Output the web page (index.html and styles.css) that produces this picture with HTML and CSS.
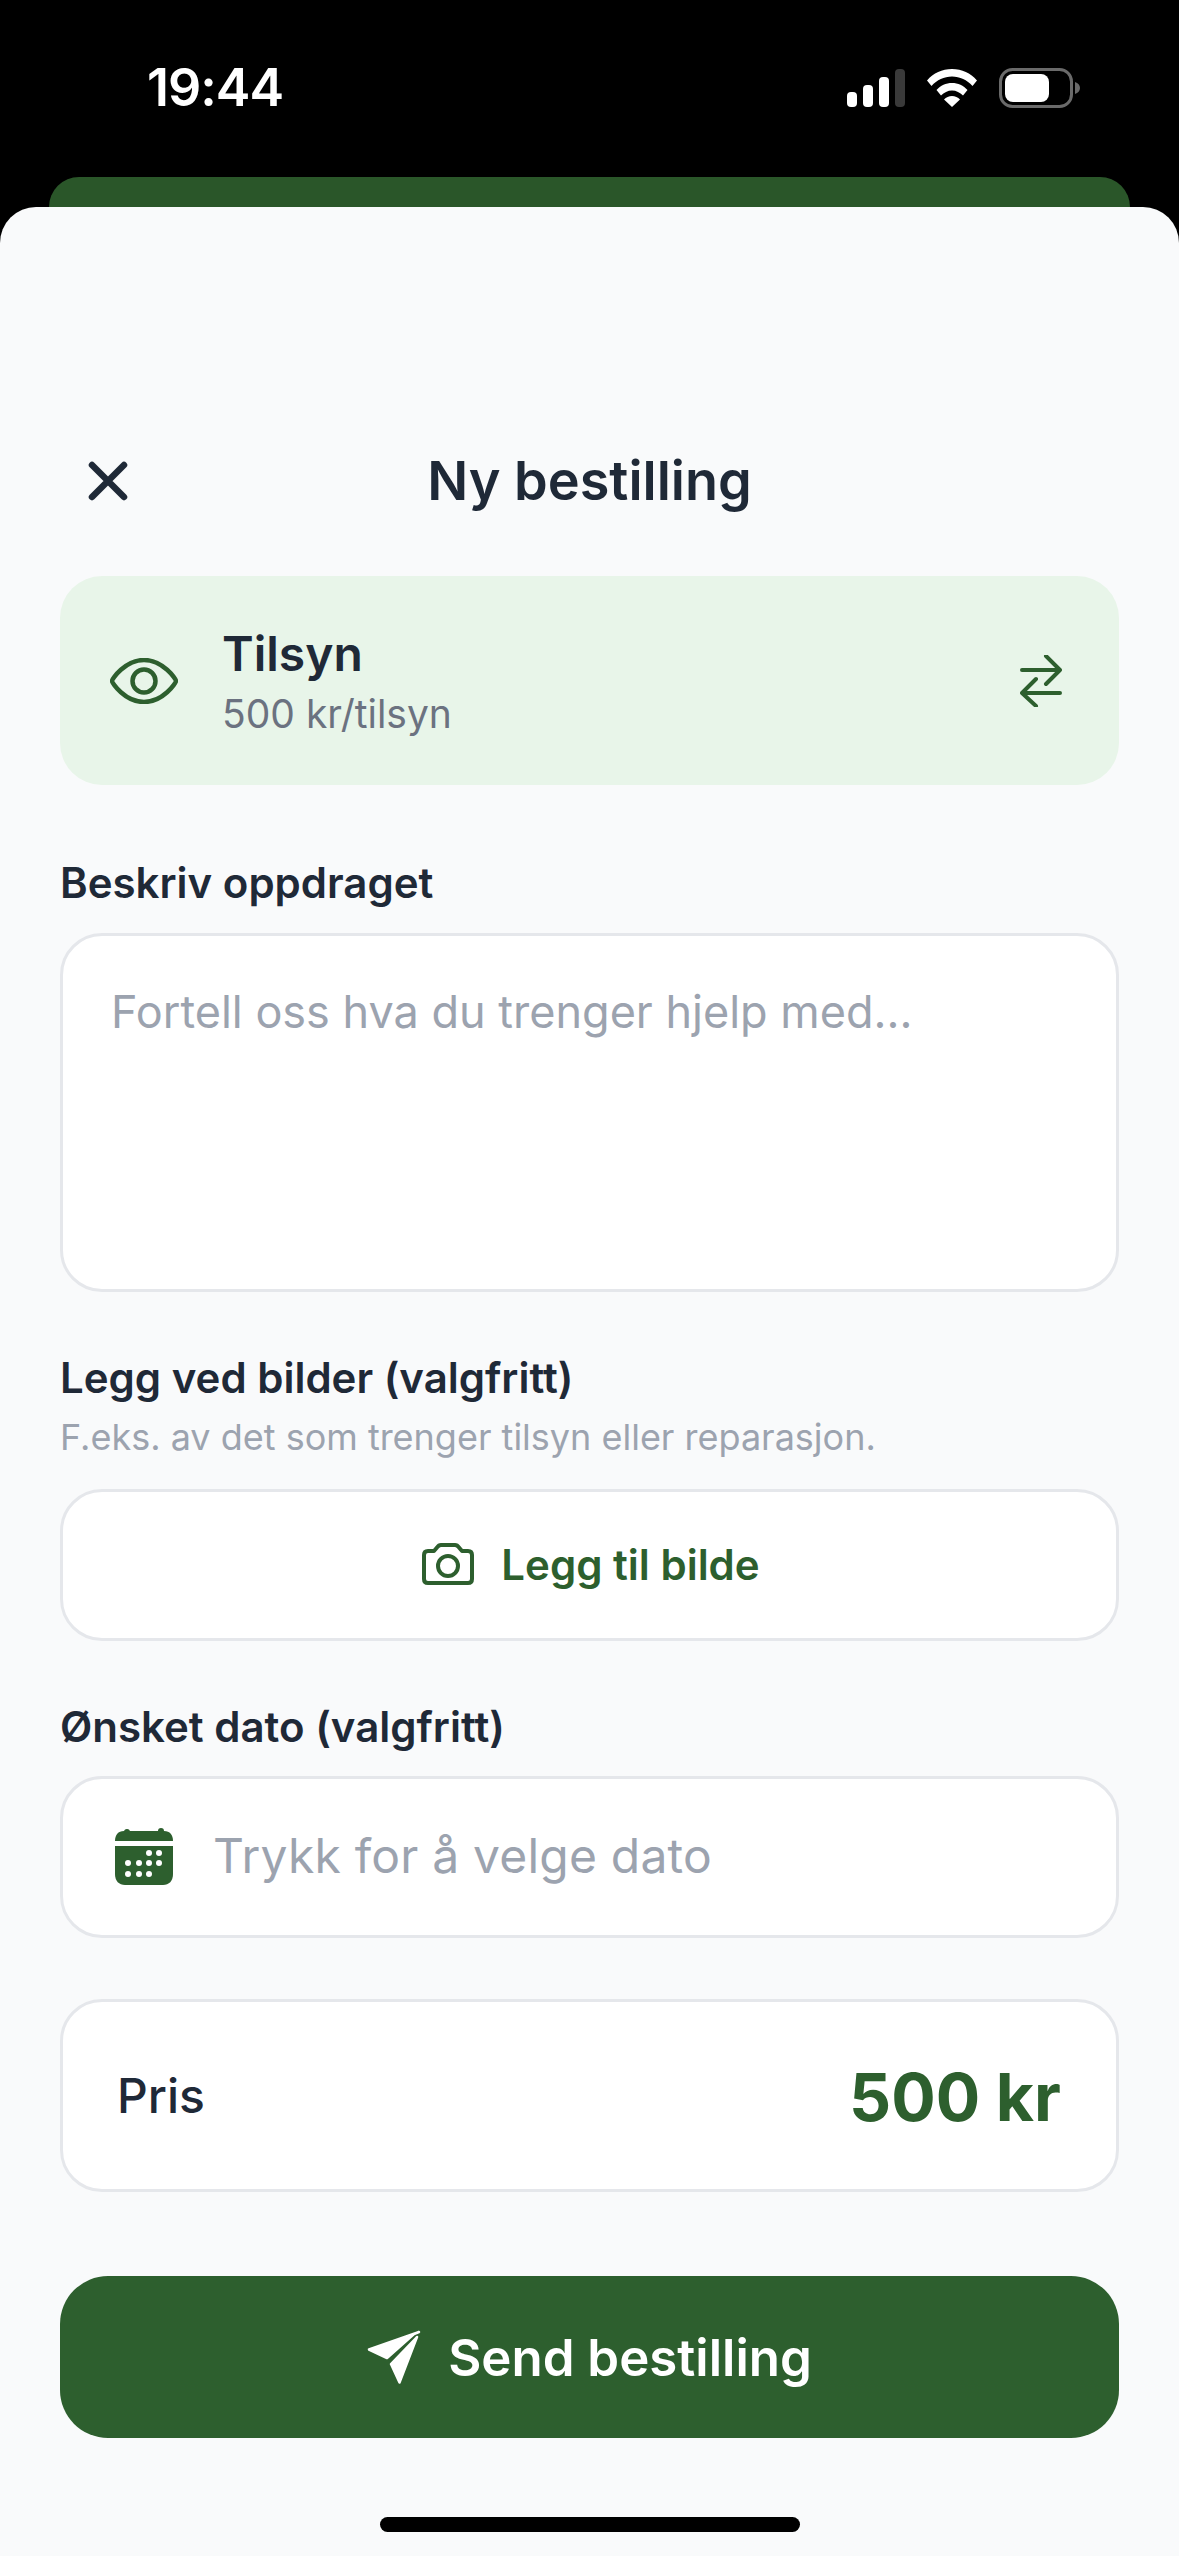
FILE: index.html
```html
<!DOCTYPE html>
<html lang="no">
<head>
  <meta charset="UTF-8" />
  <meta name="viewport" content="width=device-width, initial-scale=1" />
  <title>Ny bestilling</title>
  <link rel="stylesheet" href="styles.css">
</head>
<body>

  <div class="status-bar">
    <span class="time">19:44</span>
    <div class="status-icons">
      <svg class="signal" width="58" height="38" viewBox="0 0 58 38">
        <rect x="0" y="23" width="10" height="15" rx="4" fill="#fff"/>
        <rect x="16" y="16" width="10" height="22" rx="4" fill="#fff"/>
        <rect x="32" y="8" width="10" height="30" rx="4" fill="#fff"/>
        <rect x="48" y="0" width="10" height="38" rx="4" fill="#3a3a3a"/>
      </svg>
      <svg class="wifi" width="50" height="38" viewBox="0 0 50 38">
        <path d="M0 11.500C6.500 4 15 0 25 0s18.500 4 25 11.500l-4.500 5.500C40 11 33 7.500 25 7.500S10 11 4.500 17z" fill="#fff"/>
        <path d="M9.500 21C13.500 16.500 19 14 25 14s11.500 2.500 15.500 7L36 26.500C33 23.500 29.200 21.500 25 21.500s-8 2-11 5z" fill="#fff"/>
        <path d="M17 30.500c2-2.200 5-3.500 8-3.500s6 1.300 8 3.500L25 38z" fill="#fff"/>
      </svg>
      <svg class="battery" width="82" height="40" viewBox="0 0 82 40">
        <rect x="1.500" y="1.500" width="71" height="37" rx="12" fill="none" stroke="#6a6a6a" stroke-width="3"/>
        <rect x="6" y="6" width="44" height="28" rx="8" fill="#fff"/>
        <path d="M76 14c3 1 5 3 5 6s-2 5-5 6z" fill="#6a6a6a"/>
      </svg>
    </div>
  </div>
  <div class="peek"></div>

  <div class="sheet">
    <div class="header">
      <svg class="close-icon" width="40" height="40" viewBox="0 0 40 40" fill="none" stroke="#1f2937" stroke-width="6.500" stroke-linecap="round">
        <path d="M4 4l32 32M36 4L4 36"/>
      </svg>
      <h1 class="title">Ny bestilling</h1>
    </div>

    <div class="service-card">
      <svg class="eye-icon" width="68" height="46" viewBox="0 0 68 46" fill="none" stroke="#2d5f2e" stroke-width="4.500">
        <path d="M2 23C2 21 15 2 34 2s32 19 32 21-13 21-32 21S2 25 2 23z"/>
        <circle cx="34" cy="23" r="11.500"/>
      </svg>
      <div class="service-text">
        <div class="service-name">Tilsyn</div>
        <div class="service-price">500 kr/tilsyn</div>
      </div>
      <svg class="swap-icon" width="42" height="52" viewBox="0 0 42 52" fill="none" stroke="#2d5f2e" stroke-width="4" stroke-linecap="round" stroke-linejoin="round">
        <path d="M2 15h38M26 1l14 14-14 14M40 38H2M16 24L2 38l14 13"/>
      </svg>
    </div>

    <div class="label label-first">Beskriv oppdraget</div>
    <div class="field field-text">Fortell oss hva du trenger hjelp med...</div>

    <div class="label label-photos">Legg ved bilder (valgfritt)</div>
    <div class="hint">F.eks. av det som trenger tilsyn eller reparasjon.</div>
    <button class="add-photo">
      <svg width="52" height="42" viewBox="0 0 52 42" fill="none" stroke="#2d5f2e" stroke-width="4" stroke-linejoin="round">
        <path d="M6 8h6l3-3.500C16 3 17.500 2 19 2h14c1.500 0 3 1 4 2.500L40 8h6c2.500 0 4 1.500 4 4v24c0 2.500-1.500 4-4 4H6c-2.500 0-4-1.500-4-4V12c0-2.500 1.500-4 4-4z"/>
        <circle cx="26" cy="23" r="10"/>
      </svg>
      <span>Legg til bilde</span>
    </button>

    <div class="label label-date">Ønsket dato (valgfritt)</div>
    <div class="field date-field">
      <svg width="58" height="58" viewBox="0 0 58 58">
        <path d="M9 4h0a3 3 0 0 1 3-2 3 3 0 0 1 3 2h28a3 3 0 0 1 3-3 3 3 0 0 1 3 3c6 0 9 4 9 10H0C0 8 3 4 9 4z" fill="#2d5f2e"/>
        <path d="M0 19h58v28c0 7-4 11-10 11H10C4 58 0 54 0 47z" fill="#2d5f2e"/>
        <g fill="#fff">
          <circle cx="34" cy="26" r="3"/><circle cx="44" cy="26" r="3"/>
          <circle cx="13" cy="36" r="3"/><circle cx="24" cy="36" r="3"/><circle cx="34" cy="36" r="3"/><circle cx="44" cy="36" r="3"/>
          <circle cx="13" cy="47" r="3"/><circle cx="24" cy="47" r="3"/><circle cx="34" cy="47" r="3"/>
        </g>
      </svg>
      <span>Trykk for å velge dato</span>
    </div>

    <div class="price-box">
      <span class="price-label">Pris</span>
      <span class="price-value">500 kr</span>
    </div>

    <button class="send">
      <svg width="54" height="54" viewBox="0 0 54 54" fill="#fff" stroke="#fff" stroke-width="2.500" stroke-linejoin="round">
        <path d="M52 2L2 19.500 20 28 47 4z"/>
        <path d="M50 7L24 34l8.500 18.500z"/>
      </svg>
      <span>Send bestilling</span>
    </button>

    <div class="home-indicator"></div>
  </div>

</body>
</html>
```

FILE: styles.css
```css
* {
  box-sizing: border-box;
}
body {
  margin: 0;
  background-color: #000;
  font-family: Inter, "Noto Sans", sans-serif;
  color: #1f2937;
}
.status-bar {
  height: 177px;
  padding: 68px 98px 0 147px;
  display: flex;
  justify-content: space-between;
  align-items: flex-start;
  color: #fff;
}
.time {
  font-size: 52px;
  font-weight: 600;
  line-height: 40px;
  letter-spacing: -1px;
}
.status-icons {
  display: flex;
  align-items: center;
  gap: 22px;
}
.peek {
  height: 30px;
  margin: 0 49px;
  background-color: #2a5629;
  border-radius: 30px 30px 0 0;
}
.sheet {
  height: 2349px;
  padding: 229px 60px 0;
  background-color: #f9fafb;
  border-radius: 36px 36px 0 0;
}
.header {
  height: 90px;
  padding-bottom: 1px;
  position: relative;
  display: flex;
  align-items: center;
  justify-content: center;
}
.close-icon {
  position: absolute;
  left: 28px;
  top: 25px;
}
.title {
  margin: 0;
  font-size: 54px;
  font-weight: 600;
}
.service-card {
  height: 209px;
  margin-top: 50px;
  padding: 0 57px 0 50px;
  display: flex;
  align-items: center;
  background-color: #e8f5e9;
  border-radius: 42px;
}
.service-text {
  flex: 1;
  margin-left: 44px;
  padding-top: 4px;
}
.service-name {
  font-size: 48px;
  font-weight: 600;
  line-height: 60px;
}
.service-price {
  margin-top: 2px;
  font-size: 39px;
  line-height: 56px;
  color: #6b7280;
}
.label {
  font-size: 42px;
  font-weight: 600;
  line-height: 60px;
}
.label-first {
  margin-top: 68px;
}
.label-photos {
  margin-top: 56px;
}
.label-date {
  margin-top: 56px;
}
.hint {
  margin-top: 5px;
  font-size: 36px;
  line-height: 48px;
  color: #9ca3af;
}
.field {
  background-color: #fff;
  border: 3px solid #e5e7eb;
  border-radius: 42px;
  font-size: 48px;
  color: #9ca3af;
}
.field-text {
  height: 359px;
  margin-top: 20px;
  padding: 46px 48px;
  font-size: 45px;
  line-height: 60px;
}
.add-photo {
  width: 100%;
  height: 152px;
  margin-top: 28px;
  padding: 0 0 2px 3px;
  display: flex;
  align-items: center;
  justify-content: center;
  gap: 27px;
  background-color: #fff;
  border: 3px solid #e5e7eb;
  border-radius: 42px;
  font-family: inherit;
  font-size: 42px;
  font-weight: 600;
  color: #2d5f2e;
}
.date-field {
  height: 162px;
  margin-top: 19px;
  padding: 0 52px 3px;
  display: flex;
  align-items: center;
  gap: 40px;
  letter-spacing: 0.2px;
}
.price-box {
  height: 193px;
  margin-top: 61px;
  padding: 0 55px 0 54px;
  display: flex;
  align-items: center;
  justify-content: space-between;
  background-color: #fff;
  border: 3px solid #e5e7eb;
  border-radius: 42px;
}
.price-label {
  font-size: 48px;
  font-weight: 500;
}
.price-value {
  margin-top: 2px;
  font-size: 66px;
  font-weight: 700;
  color: #2d5f2e;
}
.send {
  width: 100%;
  height: 162px;
  margin-top: 84px;
  padding-left: 6px;
  display: flex;
  align-items: center;
  justify-content: center;
  gap: 27px;
  background-color: #2d5f2e;
  border: none;
  border-radius: 48px;
  font-family: inherit;
  font-size: 51px;
  font-weight: 600;
  color: #fff;
}
.home-indicator {
  width: 420px;
  height: 15px;
  margin: 79px auto 0;
  background-color: #000;
  border-radius: 8px;
}
```
